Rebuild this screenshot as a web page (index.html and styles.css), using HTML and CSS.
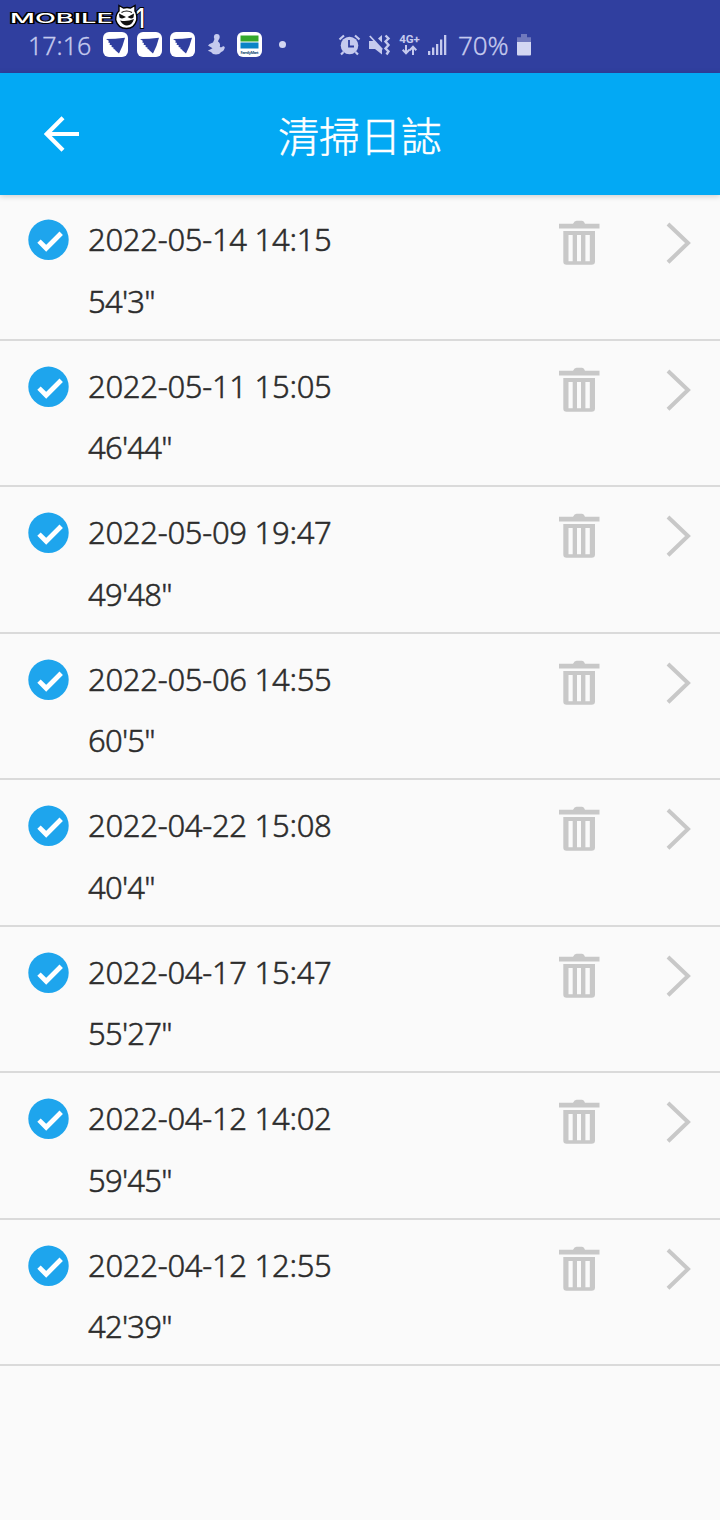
FILE: index.html
```html
<!DOCTYPE html>
<html lang="zh-TW">
<head>
    <meta charset="UTF-8">
    <meta name="viewport" content="width=device-width, initial-scale=1.0">
    <title>清掃日誌</title>
    <link rel="stylesheet" href="styles.css">
</head>
<body>
    <!-- Shared icons -->
    <svg class="icon-defs" width="0" height="0">
        <symbol id="app" viewBox="0 0 25 25">
            <rect width="25" height="25" rx="6" fill="#fff"/>
            <path d="M3 7 Q12 7 22 5.7 Q20 14 16 21.5 L12.5 18.5 L12 17.5 L10.5 17 L10.5 15.5 L8.5 15 L8.8 13.2 L6.5 12.8 L7 11 L5 10.3 L6 9 Z" fill="#303f9f"/>
        </symbol>
        <symbol id="check" viewBox="0 0 41 41">
            <circle cx="20.5" cy="20.8" r="20.2" fill="#1ea5ed"/>
            <path d="M11 22.1 L18.2 29.3 L33.2 14.3" fill="none" stroke="#fff" stroke-width="4.8"/>
        </symbol>
        <symbol id="trash" viewBox="0 0 42 46">
            <path d="M1 3.8 H15 Q16.5 .8 18.5 .8 H24 Q26 .8 27 3.8 H41.5 V8.6 H1 Z"/>
            <path fill-rule="evenodd" d="M5.3 11 H37 V41.5 Q37 44.8 33.5 44.8 H8.5 Q5.3 44.8 5.3 41.5 Z M10.5 15 V41.3 H14.7 V15 Z M19 15 V41.3 H23 V15 Z M27.4 15 V41.3 H31.8 V15 Z"/>
        </symbol>
        <symbol id="next" viewBox="0 0 26 44">
            <path d="M2 3 L22 22 L2 41.3" fill="none" stroke="#c8c8c8" stroke-width="4"/>
        </symbol>
    </svg>

    <!-- Status bar -->
    <div class="status-bar">
        <span class="time">17:16</span>
        <div class="apps">
            <svg width="25" height="25"><use href="#app"/></svg>
            <svg width="25" height="25"><use href="#app"/></svg>
            <svg width="25" height="25"><use href="#app"/></svg>
            <svg class="figure" width="18" height="21" viewBox="0 0 18 21" fill="#c5caee">
                <circle cx="9.8" cy="3" r="2.9"/>
                <path d="M7.5 5 L11.8 5 L11 7.5 Q13.8 9 12.8 13 Q15 14 16 12 L17.8 13 Q17.5 17 14.2 18 Q12.5 20.5 9 20.5 Q5.5 20.5 4 18 L.8 16.8 L5.5 14.2 L1 11.5 L2.5 10 L6 8.5 Z"/>
            </svg>
            <svg width="25" height="25" viewBox="0 0 25 25">
                <rect width="25" height="25" rx="6" fill="#fff"/>
                <rect x="3.5" y="3.5" width="18" height="6" fill="#35a82c"/>
                <rect x="3.5" y="10.5" width="18" height="6" fill="#0a84c6"/>
                <text x="3.5" y="22" font-size="4" font-weight="bold" textLength="18" fill="#25557a">FamilyMart</text>
            </svg>
            <span class="dot"></span>
        </div>
        <div class="system">
            <svg width="23" height="22" viewBox="0 0 23 22">
                <circle cx="11.5" cy="11.5" r="8.8" fill="#c5caee"/>
                <path d="M1.5 5.5 L6 1.5 M17 1.5 L21.5 5.5 M5.5 18 L3 20.5 M17.5 18 L20 20.5" stroke="#c5caee" stroke-width="2.2"/>
                <path d="M11 6 V12.5 H16" fill="none" stroke="#303f9f" stroke-width="1.8"/>
            </svg>
            <svg width="22" height="22" viewBox="0 0 22 22" fill="#c5caee">
                <path d="M0 7 H5 L13 15 V20.5 L6 15 H0 Z M9 4.5 L13 1 V8.5 Z"/>
                <path d="M.8 2 L13.3 15.5" stroke="#c5caee" stroke-width="1.8"/>
                <path d="M16.5 1.5 L19.5 4.5 L16.5 7.5 L19.5 11 L16.5 14.5 L19.5 17.5 L17.5 20.5" fill="none" stroke="#c5caee" stroke-width="2.4"/>
            </svg>
            <div class="network">
                <span>4G+</span>
                <svg width="15" height="10" viewBox="0 0 15 10" fill="none" stroke="#c5caee" stroke-width="2">
                    <path d="M4 0 V8 M.7 4.8 L4 8.2 L7.3 4.8 M11 10 V2 M7.7 5.2 L11 1.8 L14.3 5.2"/>
                </svg>
            </div>
            <svg class="signal" width="19" height="21" viewBox="0 0 19 21" fill="#c5caee">
                <path d="M0 17 h2.3 v4 h-2.3z M4 13.5 h2.3 v7.5 h-2.3z M8 10 h2.3 v11 h-2.3z M12 5.5 h2.3 v15.5 h-2.3z M16 1 h2.3 v20 h-2.3z"/>
            </svg>
            <span class="percent">70%</span>
            <svg width="14" height="22" viewBox="0 0 14 22">
                <path d="M0 3.2 H4 V0 H10 V3.2 H14 V8 H0 Z" fill="#7079bd"/>
                <path d="M0 8 H14 V20.5 Q14 21.5 13 21.5 H1 Q0 21.5 0 20.5 Z" fill="#d3d7f2"/>
            </svg>
        </div>
        <!-- Watermark lies over the bar -->
        <svg class="watermark" width="160" height="36" viewBox="0 0 160 36">
            <text class="mark" x="1" y="22.5" font-size="13.5" textLength="103" lengthAdjust="spacingAndGlyphs">MOBILE</text>
            <path d="M110 5.5 L114.5 8 Q118 7 121.5 8 L126 5.5 L126 11 Q128.3 14 127.8 20 Q125.5 28.5 117.5 28.5 Q109 28.5 106.7 20 Q106.5 14 110 11 Z" fill="#fff" stroke="#000" stroke-width="1.4"/>
            <path d="M110 13.5 L117 17 Q113 19.5 110.5 17.5 Z M125 13.5 L118.5 17 Q122 19.5 124.5 17.5 Z M111 20.5 Q118 22 125 19 Q123 25.5 118 25.5 Q114 25.5 111 20.5 Z" fill="#111"/>
            <path d="M112.5 12.5 Q117.5 9.5 123 12.5" fill="none" stroke="#111" stroke-width="1.1"/>
            <text class="mark" x="127" y="27.5" font-size="27" textLength="9" lengthAdjust="spacingAndGlyphs">1</text>
        </svg>
    </div>

    <!-- Header -->
    <header>
        <svg class="back" width="36" height="36" viewBox="0 0 36 36" fill="none" stroke="#fff" stroke-width="4.2">
            <path d="M35 18 H3 M19 1.8 L2.8 18 L19 34.2"/>
        </svg>
        <h1>清掃日誌</h1>
    </header>

    <!-- Cleaning records -->
    <ul class="log">
        <li>
            <svg class="check"><use href="#check"/></svg>
            <div class="record"><p>2022-05-14 14:15</p><p class="duration">54'3"</p></div>
            <svg class="trash"><use href="#trash"/></svg>
            <svg class="next"><use href="#next"/></svg>
        </li>
        <li>
            <svg class="check"><use href="#check"/></svg>
            <div class="record"><p>2022-05-11 15:05</p><p class="duration">46'44"</p></div>
            <svg class="trash"><use href="#trash"/></svg>
            <svg class="next"><use href="#next"/></svg>
        </li>
        <li>
            <svg class="check"><use href="#check"/></svg>
            <div class="record"><p>2022-05-09 19:47</p><p class="duration">49'48"</p></div>
            <svg class="trash"><use href="#trash"/></svg>
            <svg class="next"><use href="#next"/></svg>
        </li>
        <li>
            <svg class="check"><use href="#check"/></svg>
            <div class="record"><p>2022-05-06 14:55</p><p class="duration">60'5"</p></div>
            <svg class="trash"><use href="#trash"/></svg>
            <svg class="next"><use href="#next"/></svg>
        </li>
        <li>
            <svg class="check"><use href="#check"/></svg>
            <div class="record"><p>2022-04-22 15:08</p><p class="duration">40'4"</p></div>
            <svg class="trash"><use href="#trash"/></svg>
            <svg class="next"><use href="#next"/></svg>
        </li>
        <li>
            <svg class="check"><use href="#check"/></svg>
            <div class="record"><p>2022-04-17 15:47</p><p class="duration">55'27"</p></div>
            <svg class="trash"><use href="#trash"/></svg>
            <svg class="next"><use href="#next"/></svg>
        </li>
        <li>
            <svg class="check"><use href="#check"/></svg>
            <div class="record"><p>2022-04-12 14:02</p><p class="duration">59'45"</p></div>
            <svg class="trash"><use href="#trash"/></svg>
            <svg class="next"><use href="#next"/></svg>
        </li>
        <li>
            <svg class="check"><use href="#check"/></svg>
            <div class="record"><p>2022-04-12 12:55</p><p class="duration">42'39"</p></div>
            <svg class="trash"><use href="#trash"/></svg>
            <svg class="next"><use href="#next"/></svg>
        </li>
    </ul>
</body>
</html>
```
FILE: styles.css
```css
* {
    box-sizing: border-box;
}
body {
    font-family: "Noto Sans", "Noto Sans CJK TC", sans-serif;
    margin: 0;
    min-height: 1520px;
    background-color: #fafafa;
    color: #2c2c2c;
}
svg {
    display: block;
    flex: none;
}
.icon-defs {
    position: absolute;
}
.status-bar {
    position: relative;
    display: flex;
    height: 73px;
    padding: 16px 0 0 28px;
    align-items: center;
    background-color: #303f9f; /* Indigo */
    color: #c5caee;
    font-size: 25px;
    font-weight: 300;
    -webkit-text-stroke: 0.3px #c5caee;
}
.time {
    width: 75px;
    line-height: 32px;
}
.apps {
    display: flex;
    align-items: center;
    gap: 8.5px;
    width: 235px;
}
.figure {
    margin: 0 4px 0 3px;
}
.dot {
    width: 7px;
    height: 7px;
    margin-left: 8px;
    border-radius: 50%;
    background-color: #d3d7f2;
}
.system {
    display: flex;
    align-items: center;
    gap: 8px;
}
.network {
    display: flex;
    flex-direction: column;
    align-items: center;
    width: 21px;
    font-family: Roboto, sans-serif;
    font-size: 11.5px;
    font-weight: bold;
    line-height: 11px;
    -webkit-text-stroke: 0;
}
.percent {
    width: 51px;
    margin-left: 3px;
    font-size: 26px;
    line-height: 32px;
    letter-spacing: -0.1px;
}
.watermark {
    position: absolute;
    left: 9px;
    top: 0;
    -webkit-text-stroke: 0;
}
.mark {
    font-family: Inter, sans-serif;
    font-weight: 500;
    fill: #fff;
    stroke: #000;
    stroke-width: 2px;
    paint-order: stroke;
}
header {
    position: relative;
    display: grid;
    grid-template-columns: 80px 1fr 80px;
    align-items: center;
    height: 122px;
    background-color: #03a9f4; /* Light blue */
    color: white;
    box-shadow: 0 1px 6px rgba(0, 0, 0, 0.2);
}
.back {
    margin-left: 44px;
}
h1 {
    margin: 0;
    font-family: "Noto Sans CJK TC", sans-serif;
    font-size: 41px;
    font-weight: 300;
    line-height: 60px;
    text-align: center;
    -webkit-text-stroke: 0.5px white;
}
.log {
    margin: -1px 0 0;
    padding: 0;
    list-style: none;
}
.log li {
    display: flex;
    align-items: flex-start;
    height: 146.5px;
    padding: 25px 28px 0 28px;
    border-bottom: 2.5px solid #dadada;
}
.check {
    width: 41px;
    height: 41px;
}
.record {
    flex: 1;
    margin-left: 19px;
    font-size: 31px;
    font-weight: 300;
    letter-spacing: -0.28px;
    -webkit-text-stroke: 0.5px #2c2c2c;
}
.record p {
    margin: 0;
    height: 61.5px;
    line-height: 40px;
}
.record .duration {
    letter-spacing: -0.75px;
}
.trash {
    width: 42px;
    height: 46px;
    margin: 1px 66px 0 0;
    fill: #c8c8c8;
}
.next {
    width: 26px;
    height: 44px;
    margin-top: 2px;
}
```
